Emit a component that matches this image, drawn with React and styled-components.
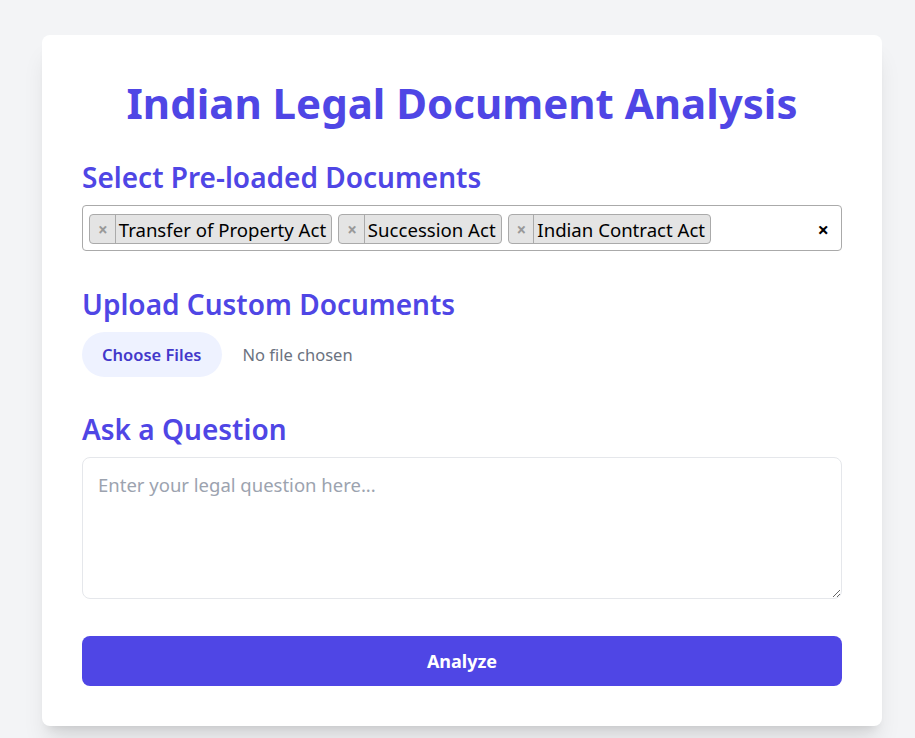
import React from "react";
import styled, { createGlobalStyle } from "styled-components";

const GlobalStyle = createGlobalStyle`
  html, body {
    margin: 0;
    padding: 0;
    background: #f3f4f6;
    font-family: "Noto Sans", "Open Sans", sans-serif;
  }
  * { box-sizing: border-box; }
`;

const Page = styled.div`
  min-height: 738px;
  padding: 35px 33px 12px 42px;
`;

const Card = styled.div`
  background: #ffffff;
  border-radius: 8px;
  padding: 40px;
  box-shadow: 0 20px 25px -5px rgba(0, 0, 0, 0.1), 0 8px 10px -6px rgba(0, 0, 0, 0.1);
`;

const Title = styled.h1`
  margin: 0 0 26px;
  text-align: center;
  font-size: 42px;
  line-height: 56px;
  font-weight: 700;
  color: #4f46e5;
`;

const SectionTitle = styled.h2`
  margin: 0 0 8px;
  font-size: 28px;
  line-height: 40px;
  font-weight: 600;
  color: #4f46e5;
`;

const Section = styled.div`
  margin-bottom: ${(p) => p.$gap || 24}px;
`;

const SelectBox = styled.div`
  display: flex;
  align-items: center;
  height: 46px;
  border: 1px solid #aaaaaa;
  border-radius: 4px;
  padding: 1px 12px 0 6px;
  gap: 6px;
`;

const Tag = styled.span`
  display: inline-flex;
  align-items: stretch;
  height: 30px;
  background: #e4e4e4;
  border: 1px solid #aaaaaa;
  border-radius: 4px;
  font-size: 18.6px;
  color: #000;
`;

const TagRemove = styled.span`
  display: flex;
  align-items: center;
  padding: 1px 7px 0 8px;
  color: #999999;
  font-size: 17px;
  font-weight: 700;
  border-right: 1px solid #aaaaaa;
`;

const TagLabel = styled.span`
  display: flex;
  align-items: center;
  padding: 2px 5px 0 3px;
`;

const Clear = styled.span`
  margin-left: auto;
  padding-top: 2px;
  font-size: 20px;
  font-weight: 700;
  color: #000;
`;

const FileInput = styled.input`
  font-family: inherit;
  font-size: 16.5px;
  color: #6b7280;

  &::file-selector-button {
    font-family: inherit;
    font-size: 16.5px;
    font-weight: 600;
    color: #4338ca;
    background: #eef2ff;
    border: none;
    border-radius: 9999px;
    padding: 0 20px;
    height: 45px;
    margin-right: 21px;
    cursor: pointer;
  }
`;

const TextArea = styled.textarea`
  display: block;
  width: 100%;
  height: 142px;
  border: 1px solid #e5e7eb;
  border-radius: 8px;
  padding: 14px 15px;
  font-family: inherit;
  font-size: 18.5px;
  color: #111827;
  outline: none;

  &::placeholder {
    color: #9ca3af;
  }
`;

const Button = styled.button`
  display: block;
  width: 100%;
  height: 50px;
  background: #4f46e5;
  color: #ffffff;
  border: none;
  border-radius: 8px;
  font-family: inherit;
  font-size: 18px;
  font-weight: 700;
  cursor: pointer;
`;

const docs = ["Transfer of Property Act", "Succession Act", "Indian Contract Act"];

export default function App() {
  return (
    <>
      <GlobalStyle />
      <Page>
        <Card>
          <Title>Indian Legal Document Analysis</Title>
          <Section $gap={33}>
            <SectionTitle>Select Pre-loaded Documents</SectionTitle>
            <SelectBox>
              {docs.map((d) => (
                <Tag key={d}>
                  <TagRemove>×</TagRemove>
                  <TagLabel>{d}</TagLabel>
                </Tag>
              ))}
              <Clear>×</Clear>
            </SelectBox>
          </Section>
          <Section $gap={32}>
            <SectionTitle>Upload Custom Documents</SectionTitle>
            <FileInput type="file" multiple />
          </Section>
          <Section $gap={37}>
            <SectionTitle>Ask a Question</SectionTitle>
            <TextArea placeholder="Enter your legal question here..." />
          </Section>
          <Button>Analyze</Button>
        </Card>
      </Page>
    </>
  );
}
